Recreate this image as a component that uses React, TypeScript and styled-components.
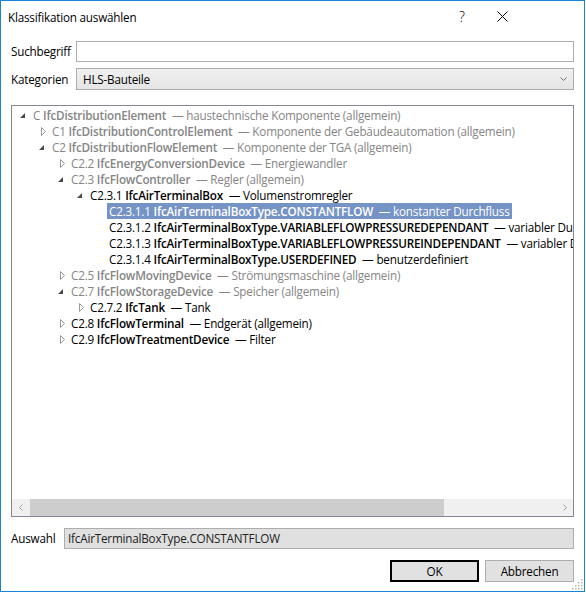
import React from "react";
import styled, { createGlobalStyle } from "styled-components";

const Global = createGlobalStyle`
  html, body { margin: 0; padding: 0; background: #ffffff; }
  body {
    font-family: "Open Sans", "Noto Sans", sans-serif;
    font-size: 11.7px;
    letter-spacing: -0.2px;
    color: #000;
  }
  * { box-sizing: border-box; }
`;

const Window = styled.div`
  width: 585px;
  height: 592px;
  border: 1px solid #1883d7;
  background: #fff;
  display: flex;
  flex-direction: column;
  position: relative;
  overflow: hidden;
`;

const TitleBar = styled.div`
  height: 30px;
  display: flex;
  align-items: center;
  padding-left: 7px;
  padding-right: 62px;
`;

const TitleText = styled.div`
  flex: 1;
  padding-top: 1px;
`;

const CaptionButton = styled.div`
  width: 40px;
  height: 30px;
  display: flex;
  align-items: center;
  justify-content: center;
  font-size: 14px;
  font-weight: 300;
  letter-spacing: 0;
`;

const Body = styled.div`
  flex: 1;
  min-width: 0;
  display: flex;
  flex-direction: column;
  padding: 10px 10px 0 10px;
`;

const FieldRow = styled.div<{ $label: number; $h: number; $mb: number }>`
  display: grid;
  grid-template-columns: ${(p) => p.$label}px minmax(0, 1fr);
  align-items: center;
  height: ${(p) => p.$h}px;
  margin-bottom: ${(p) => p.$mb}px;
`;

const Label = styled.div`
  padding-bottom: 1px;
`;

const TextInput = styled.div`
  height: 100%;
  border: 1px solid #abadb3;
  background: #fff;
`;

const Combo = styled.div`
  height: 100%;
  border: 1px solid #acacac;
  background: linear-gradient(#f0f0f0, #e5e5e5);
  display: flex;
  align-items: center;
  justify-content: space-between;
  padding: 0 6px 0 6px;
`;

const TreeBox = styled.div`
  height: 412px;
  min-width: 0;
  border: 1px solid #828790;
  display: flex;
  flex-direction: column;
  margin-bottom: 11px;
  overflow: hidden;
`;

const TreeViewport = styled.div`
  flex: 1;
  min-width: 0;
  overflow: hidden;
  padding-top: 1px;
`;

const Row = styled.div<{ $level: number }>`
  height: 16px;
  display: flex;
  align-items: center;
  padding-left: ${(p) => p.$level * 19}px;
  white-space: nowrap;
`;

const Expander = styled.div`
  width: 19px;
  height: 16px;
  flex: none;
  display: flex;
`;

const ItemLabel = styled.div<{ $muted: boolean; $selected: boolean }>`
  height: 16px;
  line-height: 16px;
  padding: 0 2px;
  flex: none;
  color: ${(p) => (p.$selected ? "#fff" : p.$muted ? "#858585" : "#000")};
  background: ${(p) => (p.$selected ? "#7693c6" : "transparent")};
  white-space: pre;
`;

const Name = styled.span`
  font-weight: 600;
`;

const HScroll = styled.div`
  height: 17px;
  flex: none;
  background: #f0f0f0;
  display: flex;
  align-items: stretch;
`;

const ScrollArrow = styled.div`
  width: 17px;
  display: flex;
  align-items: center;
  justify-content: center;
`;

const ScrollTrack = styled.div`
  flex: 1;
  display: flex;
  align-items: stretch;
  padding: 0 1px;
`;

const ScrollThumb = styled.div`
  width: 414px;
  background: #cdcdcd;
`;

const ReadOnlyField = styled.div`
  height: 100%;
  border: 1px solid #adadad;
  background: #e0e0e0;
  display: flex;
  align-items: center;
  padding-left: 3px;
  padding-bottom: 1px;
  color: #222;
`;

const ButtonBar = styled.div`
  display: flex;
  justify-content: flex-end;
  gap: 6px;
`;

const Button = styled.div<{ $default?: boolean }>`
  width: 89px;
  height: 22px;
  background: #e1e1e1;
  border: ${(p) => (p.$default ? "2px solid #000" : "1px solid #adadad")};
  display: flex;
  align-items: center;
  justify-content: center;
  padding-bottom: 1px;
`;

const Grip = styled.svg`
  position: absolute;
  right: 1px;
  bottom: 1px;
`;

type Node = {
  level: number;
  exp: "open" | "closed" | "none";
  code: string;
  name: string;
  desc: string;
  muted?: boolean;
  selected?: boolean;
};

const nodes: Node[] = [
  { level: 0, exp: "open", code: "C", name: "IfcDistributionElement", desc: "haustechnische Komponente (allgemein)", muted: true },
  { level: 1, exp: "closed", code: "C1", name: "IfcDistributionControlElement", desc: "Komponente der Gebäudeautomation (allgemein)", muted: true },
  { level: 1, exp: "open", code: "C2", name: "IfcDistributionFlowElement", desc: "Komponente der TGA (allgemein)", muted: true },
  { level: 2, exp: "closed", code: "C2.2", name: "IfcEnergyConversionDevice", desc: "Energiewandler", muted: true },
  { level: 2, exp: "open", code: "C2.3", name: "IfcFlowController", desc: "Regler (allgemein)", muted: true },
  { level: 3, exp: "open", code: "C2.3.1", name: "IfcAirTerminalBox", desc: "Volumenstromregler" },
  { level: 4, exp: "none", code: "C2.3.1.1", name: "IfcAirTerminalBoxType.CONSTANTFLOW", desc: "konstanter Durchfluss", selected: true },
  { level: 4, exp: "none", code: "C2.3.1.2", name: "IfcAirTerminalBoxType.VARIABLEFLOWPRESSUREDEPENDANT", desc: "variabler Durchfluss, druckabhängig" },
  { level: 4, exp: "none", code: "C2.3.1.3", name: "IfcAirTerminalBoxType.VARIABLEFLOWPRESSUREINDEPENDANT", desc: "variabler Durchfluss, druckunabhängig" },
  { level: 4, exp: "none", code: "C2.3.1.4", name: "IfcAirTerminalBoxType.USERDEFINED", desc: "benutzerdefiniert" },
  { level: 2, exp: "closed", code: "C2.5", name: "IfcFlowMovingDevice", desc: "Strömungsmaschine (allgemein)", muted: true },
  { level: 2, exp: "open", code: "C2.7", name: "IfcFlowStorageDevice", desc: "Speicher (allgemein)", muted: true },
  { level: 3, exp: "closed", code: "C2.7.2", name: "IfcTank", desc: "Tank" },
  { level: 2, exp: "closed", code: "C2.8", name: "IfcFlowTerminal", desc: "Endgerät (allgemein)" },
  { level: 2, exp: "closed", code: "C2.9", name: "IfcFlowTreatmentDevice", desc: "Filter" },
];

function ExpanderIcon({ state }: { state: Node["exp"] }) {
  return (
    <svg width="19" height="16" viewBox="0 0 19 16">
      {state === "open" && <polygon points="13,6 13,11 8,11" fill="#4a4a4a" />}
      {state === "closed" && (
        <polygon points="10.5,4.5 14.5,8.5 10.5,12.5" fill="#fff" stroke="#9a9a9a" strokeWidth="1" />
      )}
    </svg>
  );
}

function TreeRow({ node }: { node: Node }) {
  return (
    <Row $level={node.level}>
      <Expander>
        <ExpanderIcon state={node.exp} />
      </Expander>
      <ItemLabel $muted={!!node.muted} $selected={!!node.selected}>
        {node.code} <Name>{node.name}</Name>{"  — "}
        {node.desc}
      </ItemLabel>
    </Row>
  );
}

export default function App() {
  return (
    <>
      <Global />
      <Window>
        <TitleBar>
          <TitleText>Klassifikation auswählen</TitleText>
          <CaptionButton>?</CaptionButton>
          <CaptionButton>
            <svg width="11" height="11" viewBox="0 0 11 11">
              <path d="M0.5 0.5 L10.5 10.5 M10.5 0.5 L0.5 10.5" stroke="#000" strokeWidth="1" />
            </svg>
          </CaptionButton>
        </TitleBar>
        <Body>
          <FieldRow $label={65} $h={21} $mb={6}>
            <Label>Suchbegriff</Label>
            <TextInput />
          </FieldRow>
          <FieldRow $label={65} $h={22} $mb={15}>
            <Label>Kategorien</Label>
            <Combo>
              <span>HLS-Bauteile</span>
              <svg width="7" height="5" viewBox="0 0 7 5">
                <path d="M0.5 0.5 L3.5 3.5 L6.5 0.5" stroke="#707070" fill="none" strokeWidth="1" />
              </svg>
            </Combo>
          </FieldRow>
          <TreeBox>
            <TreeViewport>
              {nodes.map((n) => (
                <TreeRow key={n.code} node={n} />
              ))}
            </TreeViewport>
            <HScroll>
              <ScrollArrow>
                <svg width="4" height="7" viewBox="0 0 4 7">
                  <path d="M3.5 0.5 L0.5 3.5 L3.5 6.5" stroke="#a0a0a0" fill="none" />
                </svg>
              </ScrollArrow>
              <ScrollTrack>
                <ScrollThumb />
              </ScrollTrack>
              <ScrollArrow>
                <svg width="4" height="7" viewBox="0 0 4 7">
                  <path d="M0.5 0.5 L3.5 3.5 L0.5 6.5" stroke="#a0a0a0" fill="none" />
                </svg>
              </ScrollArrow>
            </HScroll>
          </TreeBox>
          <FieldRow $label={53} $h={21} $mb={11}>
            <Label>Auswahl</Label>
            <ReadOnlyField>IfcAirTerminalBoxType.CONSTANTFLOW</ReadOnlyField>
          </FieldRow>
          <ButtonBar>
            <Button $default>OK</Button>
            <Button>Abbrechen</Button>
          </ButtonBar>
        </Body>
        <Grip width="11" height="11" viewBox="0 0 11 11">
          {[
            [9, 1], [9, 4], [6, 4], [9, 7], [6, 7], [3, 7], [9, 10], [6, 10], [3, 10], [0, 10],
          ].map(([x, y], i) => (
            <rect key={i} x={x} y={y - 1} width="1.5" height="1.5" fill="#b8b8b8" />
          ))}
        </Grip>
      </Window>
    </>
  );
}
